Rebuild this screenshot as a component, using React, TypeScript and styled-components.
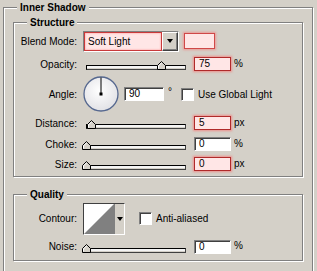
import React from 'react';
import styled, { createGlobalStyle } from 'styled-components';

const Global = createGlobalStyle`
  html, body {
    margin: 0;
    padding: 0;
    background: #d4d0c8;
    overflow: hidden;
  }
  body {
    font-family: "Liberation Sans", Arial, sans-serif;
    font-size: 10px;
    color: #000;
  }
`;

const Page = styled.div`
  width: 317px;
  height: 271px;
  overflow: hidden;
  background: #d4d0c8;
  padding-top: 7px;
  box-sizing: border-box;
`;

const Group = styled.div<{ $w: number; $ml: number; $mt?: number; $h?: number }>`
  width: ${(p) => p.$w}px;
  ${(p) => (p.$h ? `height: ${p.$h}px;` : '')}
  margin: ${(p) => p.$mt ?? 0}px 0 0 ${(p) => p.$ml}px;
  box-sizing: border-box;
  border: 1px solid #808080;
  box-shadow: inset 1px 1px 0 #fff, 1px 1px 0 #fff;
  padding-bottom: ${(p) => (p.$h ? 0 : 2)}px;
`;

const Legend = styled.div`
  width: fit-content;
  margin: -7px 0 0 13px;
  padding: 0 3px;
  line-height: 13px;
  font-weight: bold;
  background: #d4d0c8;
`;

const Row = styled.div<{ $h: number }>`
  display: flex;
  align-items: center;
  height: ${(p) => p.$h}px;
`;

const Label = styled.span`
  width: 63px;
  margin-right: 6px;
  text-align: right;
  white-space: nowrap;
`;

const Select = styled.div`
  display: flex;
  width: 96px;
  height: 21px;
  box-sizing: border-box;
  border: 1px solid;
  border-color: #808080 #fff #fff #808080;
`;

const SelectValue = styled.div`
  flex: 1;
  box-sizing: border-box;
  background: #ffe6e6;
  border: 1px solid #c83a3a;
  box-shadow: inset 0 0 2px rgba(255, 90, 90, 0.7);
  padding-left: 3px;
  line-height: 17px;
`;

const DropButton = styled.div`
  width: 16px;
  box-sizing: border-box;
  display: flex;
  align-items: center;
  justify-content: center;
  background: #d4d0c8;
  border: 1px solid;
  border-color: #fff #404040 #404040 #fff;
  box-shadow: inset -1px -1px 0 #808080;
`;

const Arrow = styled.span`
  width: 0;
  height: 0;
  border-left: 3.5px solid transparent;
  border-right: 3.5px solid transparent;
  border-top: 4px solid #000;
`;

const Swatch = styled.div`
  width: 31px;
  height: 16px;
  margin-left: 5px;
  box-sizing: border-box;
  background: #ffe6e6;
  border: 1px solid #d04848;
  box-shadow: 0 0 2px 1px rgba(255, 110, 110, 0.55);
`;

const SliderBox = styled.div`
  position: relative;
  width: 104px;
  height: 10px;
  margin-top: 2px;
`;

const Track = styled.div`
  position: absolute;
  left: 3px;
  bottom: 0;
  width: 100px;
  height: 5px;
  box-sizing: border-box;
  background: #f4f4f4;
  border: 1px solid;
  border-color: #000 #404040 #404040 #000;
  box-shadow: inset 0 -1px 0 #d4d0c8;
`;

const Thumb = styled.svg<{ $at: number }>`
  position: absolute;
  left: ${(p) => p.$at}px;
  bottom: 0;
`;

const Field = styled.div<{ $hot?: boolean; $w?: number }>`
  width: ${(p) => p.$w ?? 37}px;
  height: 14px;
  margin-left: ${(p) => (p.$w ? 5 : 7)}px;
  box-sizing: border-box;
  padding-left: 4px;
  line-height: 12px;
  background: ${(p) => (p.$hot ? '#ffe6e6' : '#fff')};
  border: 1px solid;
  border-color: ${(p) => (p.$hot ? '#b02a2a' : '#808080 #fff #fff #808080')};
  box-shadow: ${(p) =>
    p.$hot
      ? '0 0 2px 1px rgba(255, 100, 100, 0.6)'
      : 'inset 1px 1px 0 #404040'};
`;

const Unit = styled.span`
  margin-left: 3px;
  margin-top: -2px;
`;

const Check = styled.div<{ $ml: number }>`
  width: 13px;
  height: 13px;
  margin-left: ${(p) => p.$ml}px;
  box-sizing: border-box;
  background: #fff;
  border: 1px solid;
  border-color: #808080 #fff #fff #808080;
  box-shadow: inset 1px 1px 0 #404040;
`;

const CheckText = styled.span`
  margin-left: 4px;
  white-space: nowrap;
`;

const Degree = styled.span`
  margin-left: 4px;
  margin-top: -6px;
`;

const Contour = styled.div`
  display: flex;
  width: 42px;
  height: 32px;
  box-sizing: border-box;
  border: 1px solid;
  border-color: #404040 #fff #fff #404040;
  background: #d4d0c8;
`;

const ContourArrow = styled.div`
  flex: 1;
  display: flex;
  align-items: center;
  justify-content: center;
  border-left: 1px solid #808080;
`;

function Slider({ at }: { at: number }) {
  return (
    <SliderBox>
      <Track />
      <Thumb $at={at} width="9" height="9" viewBox="0 0 9 9">
        <polygon
          points="0.5,8.5 0.5,4.5 4.5,0.5 8.5,4.5 8.5,8.5"
          fill="#d4d0c8"
          stroke="#000"
          strokeWidth="1"
        />
        <polyline points="1.5,7.5 1.5,4.9 4.5,1.9" fill="none" stroke="#fff" />
      </Thumb>
    </SliderBox>
  );
}

function Dial() {
  return (
    <svg width="36" height="36" viewBox="0 0 36 36">
      <defs>
        <radialGradient id="dialFill" cx="45%" cy="40%" r="60%">
          <stop offset="0%" stopColor="#ffffff" />
          <stop offset="100%" stopColor="#e2e2e6" />
        </radialGradient>
      </defs>
      <circle cx="18" cy="18" r="17" fill="url(#dialFill)" stroke="#56688f" strokeWidth="1.3" />
      <line x1="18" y1="18" x2="18" y2="1.5" stroke="#000" strokeWidth="1" />
      <rect x="16.5" y="16.5" width="3" height="3" fill="#000" />
    </svg>
  );
}

function ValueRow({
  label,
  at,
  value,
  unit,
  hot,
  h,
}: {
  label: string;
  at: number;
  value: string;
  unit: string;
  hot?: boolean;
  h: number;
}) {
  return (
    <Row $h={h}>
      <Label>{label}</Label>
      <Slider at={at} />
      <Field $hot={hot}>{value}</Field>
      <Unit>{unit}</Unit>
    </Row>
  );
}

export default function App() {
  return (
    <Page>
      <Global />
      <Group $w={310} $ml={3} $h={290}>
        <Legend>Inner Shadow</Legend>

        <Group $w={290} $ml={9} $mt={8}>
          <Legend>Structure</Legend>
          <Row $h={22} style={{ marginTop: 1 }}>
            <Label>Blend Mode:</Label>
            <Select>
              <SelectValue>Soft Light</SelectValue>
              <DropButton>
                <Arrow />
              </DropButton>
            </Select>
            <Swatch />
          </Row>
          <ValueRow h={24} label="Opacity:" at={74} value="75" unit="%" hot />
          <Row $h={36}>
            <Label>Angle:</Label>
            <Dial />
            <Field $w={40}>90</Field>
            <Degree>°</Degree>
            <Check $ml={9} />
            <CheckText>Use Global Light</CheckText>
          </Row>
          <ValueRow h={22} label="Distance:" at={4} value="5" unit="px" hot />
          <ValueRow h={20} label="Choke:" at={-1} value="0" unit="%" />
          <ValueRow h={20} label="Size:" at={-1} value="0" unit="px" hot />
        </Group>

        <Group $w={290} $ml={9} $mt={17}>
          <Legend>Quality</Legend>
          <Row $h={33} style={{ marginTop: 1 }}>
            <Label>Contour:</Label>
            <Contour>
              <svg width="30" height="30" viewBox="0 0 30 30">
                <rect width="30" height="30" fill="#fff" />
                <polygon points="0,30 30,0 30,30" fill="#808080" />
              </svg>
              <ContourArrow>
                <Arrow />
              </ContourArrow>
            </Contour>
            <Check $ml={14} />
            <CheckText>Anti-aliased</CheckText>
          </Row>
          <ValueRow h={23} label="Noise:" at={-1} value="0" unit="%" />
        </Group>
      </Group>
    </Page>
  );
}
